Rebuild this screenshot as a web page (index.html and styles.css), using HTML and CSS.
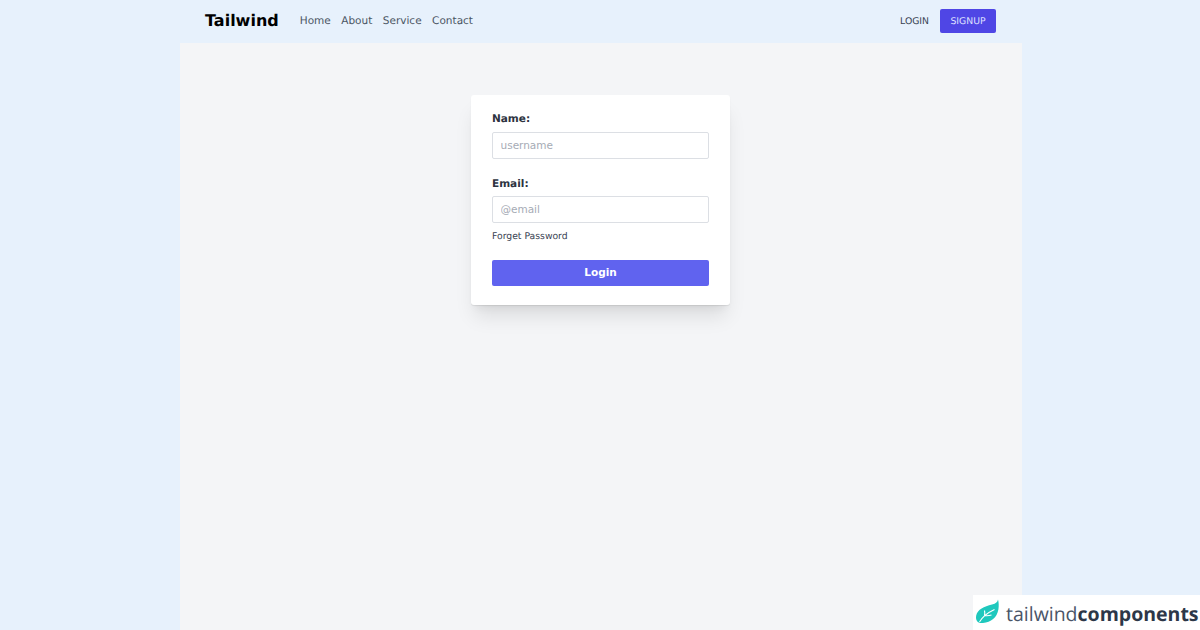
FILE: index.html
```html
<!DOCTYPE html>
<html lang="en">
<head>
  <meta charset="UTF-8">
  <title>Tailwind Login</title>
  <link rel="stylesheet" href="styles.css">
</head>
<body>

  <div class="page">
    <nav class="navbar">
      <div class="nav-left">
        <a class="brand" href="#">Tailwind</a>
        <a class="nav-link" href="#">Home</a>
        <a class="nav-link" href="#">About</a>
        <a class="nav-link" href="#">Service</a>
        <a class="nav-link" href="#">Contact</a>
      </div>
      <div class="nav-right">
        <a class="btn-login" href="#">LOGIN</a>
        <a class="btn-signup" href="#">SIGNUP</a>
      </div>
    </nav>

    <main class="content">
      <form class="card">
        <label class="field-label" for="name">Name:</label>
        <input class="field-input" type="text" id="name" placeholder="username">

        <label class="field-label field-label-email" for="email">Email:</label>
        <input class="field-input" type="text" id="email" placeholder="@email">

        <a class="forget" href="#">Forget Password</a>

        <button class="btn-submit" type="button">Login</button>
      </form>
    </main>
  </div>

  <!-- badge sits over the page corner -->
  <div class="badge">
    <svg class="badge-logo" width="24" height="25" viewBox="0 0 24 25">
      <path d="M23 0.5 C22.6 3 21 4.6 17 5.6 C9 7.6 2.6 10.5 1.2 16.5 C0.7 19 1.2 21 2 22 C3 23.6 5 24.3 8 24 C16 23.4 22 18.5 23.4 10.5 C24 7 23.8 3 23 0.5 Z" fill="#1fc8bd"/>
      <path d="M4.5 23 C7 18.5 11 14.5 19.5 10.5 M9.5 16.5 C10 14.5 10 13.5 9.5 11.5 M9.5 16.5 C12 17 14 16.8 16.5 16" fill="none" stroke="#ffffff" stroke-width="1.1"/>
    </svg>
    <span class="badge-text">tailwind<b>components</b></span>
  </div>

</body>
</html>
```

FILE: styles.css
```css
* {
  box-sizing: border-box;
}

html, body {
  height: 100%;
}

body {
  margin: 0;
  font-family: 'DejaVu Sans', sans-serif;
  text-rendering: geometricPrecision;
  background-color: #e7f1fc;
  color: #374151;
  overflow: hidden;
}

a {
  text-decoration: none;
}

.page {
  width: 842px;
  height: 630px;
  margin-left: 180px;
  display: flex;
  flex-direction: column;
}

.navbar {
  height: 43px;
  padding: 0 26px 2px 25px;
  display: flex;
  align-items: center;
  justify-content: space-between;
}

.nav-left, .nav-right {
  display: flex;
  align-items: center;
}

.brand {
  font-size: 16px;
  font-weight: bold;
  color: #000;
  margin-right: 21px;
}

.nav-link {
  font-size: 10.5px;
  color: #4b5563;
  margin-right: 10.5px;
}

.btn-login {
  font-size: 9.25px;
  color: #374151;
  margin-right: 11px;
  margin-top: 2px;
}

.btn-signup {
  font-size: 9.25px;
  color: #dfe0ff;
  background-color: #4f46e5;
  border-radius: 2px;
  width: 56px;
  height: 24px;
  padding-top: 2px;
  display: flex;
  align-items: center;
  justify-content: center;
}

.content {
  flex: 1;
  background-color: #f4f5f7;
  padding: 52px 1px 0 0;
  display: flex;
  flex-direction: column;
  align-items: center;
}

.card {
  width: 259px;
  height: 210px;
  padding: 17px 21px 0;
  background-color: #fff;
  border-radius: 3px;
  box-shadow: 0 15px 19px -4px rgba(0, 0, 0, 0.1), 0 7px 8px -4px rgba(0, 0, 0, 0.05), 0 1px 1px rgba(0, 0, 0, 0.08);
  display: flex;
  flex-direction: column;
}

.field-label {
  font-size: 10.5px;
  font-weight: bold;
  line-height: 14px;
  color: #2d3340;
  margin-bottom: 6px;
}

.field-label-email {
  margin-top: 18px;
  margin-bottom: 5px;
}

.field-input {
  width: 217px;
  height: 27px;
  padding: 0 7.5px 2px;
  font-family: inherit;
  font-size: 10.5px;
  color: #374151;
  background-color: #fff;
  border: 1px solid #dcdfe4;
  border-radius: 2px;
}

.field-input::placeholder {
  color: #a6abb5;
  opacity: 1;
}

.forget {
  font-size: 9.25px;
  line-height: 12px;
  color: #374151;
  margin-top: 8px;
}

.btn-submit {
  width: 217px;
  height: 26px;
  margin-top: 17px;
  padding: 0 0 2px;
  border: none;
  border-radius: 2px;
  background-color: #6063ef;
  color: #fff;
  font-family: inherit;
  font-size: 10.5px;
  font-weight: bold;
}

.badge {
  position: absolute;
  right: 0;
  bottom: 0;
  width: 227px;
  height: 35px;
  background-color: #fff;
  display: flex;
  align-items: center;
  padding-left: 2px;
}

.badge-logo {
  flex: none;
  margin-top: -2px;
}

.badge-text {
  margin-left: 7px;
  margin-top: 1px;
  font-family: 'Open Sans', sans-serif;
  font-size: 19.5px;
  color: #4a5568;
  white-space: nowrap;
}

.badge-text b {
  color: #2d3748;
  font-weight: 700;
}
```
